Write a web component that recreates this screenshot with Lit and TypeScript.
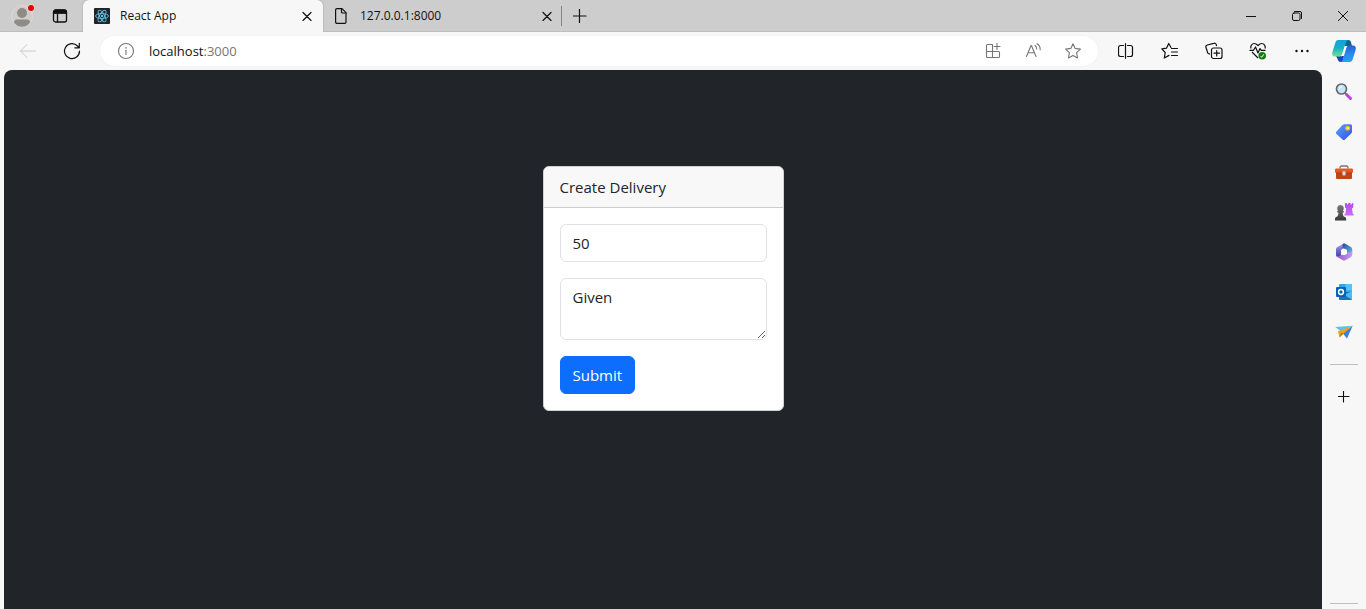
import { LitElement, html, css, svg } from "lit";
import { customElement, state } from "lit/decorators.js";

const line = (size: number, body: unknown, width = 1) => html`
  <svg width=${size} height=${size} viewBox="0 0 ${size} ${size}" fill="none" stroke="currentColor"
    stroke-width=${width} stroke-linecap="round" stroke-linejoin="round" aria-hidden="true">${body}</svg>`;

const art = (size: number, body: unknown) => html`
  <svg width=${size} height=${size} viewBox="0 0 ${size} ${size}" aria-hidden="true">${body}</svg>`;

const icons = {
  profile: art(28, svg`
    <circle cx="14" cy="14" r="10.5" fill="#d0cdca" stroke="#dcdad8"/>
    <circle cx="14" cy="11" r="5" fill="#8f8b87"/>
    <path d="M6 20.5C6 18.3 7.300 17.500 9 17.500h10c1.700 0 3 .8 3 3C20 23.300 17.300 24.800 14 24.800S8 23.300 6 20.500z" fill="#8f8b87"/>
    <circle cx="23" cy="6" r="3.600" fill="#e60000" stroke="#e8e4e4"/>`),
  workspaces: line(16, svg`
    <rect x="1.500" y="2" width="13" height="12" rx="2" stroke-width="1.300"/>
    <path d="M1.500 5V4a2 2 0 0 1 2-2h9a2 2 0 0 1 2 2v1z" fill="currentColor"/>
    <path d="M5.500 6v8" stroke-width="1.300"/>`),
  react: art(16, svg`
    <rect width="16" height="16" rx="1" fill="#20232a"/>
    <g fill="none" stroke="#61c3dd" stroke-width=".9">
      <ellipse cx="8" cy="8" rx="6.500" ry="2.500"/>
      <ellipse cx="8" cy="8" rx="6.500" ry="2.500" transform="rotate(60 8 8)"/>
      <ellipse cx="8" cy="8" rx="6.500" ry="2.500" transform="rotate(120 8 8)"/>
    </g><circle cx="8" cy="8" r="1.300" fill="#61c3dd"/>`),
  file: line(16, svg`<path d="M3 .6h5l4 4V14a1.400 1.400 0 0 1-1.400 1.400H3A1.400 1.400 0 0 1 1.600 14V2A1.400 1.400 0 0 1 3 .6z"/><path d="M7.500 .6V4a1 1 0 0 0 1 1H12"/>`, 1.2),
  closeTab: line(10, svg`<path d="M1 1.500l8 8M9 1.500l-8 8"/>`, 1.2),
  plus: line(14, svg`<path d="M6.500 .5v13M0 7h13"/>`, 1.2),
  plusSmall: line(12, svg`<path d="M5.500 0v11M0 5.500h11"/>`, 1.1),
  minimize: line(10, svg`<path d="M0 5.500h10"/>`),
  restore: line(10, svg`<rect x=".5" y="2" width="7.500" height="7.500" rx="1.500"/><path d="M2.500.5H8A1.500 1.500 0 0 1 9.500 2v5.500"/>`),
  closeWindow: line(10, svg`<path d="M.3.3l9.400 9.400M9.700.3L.3 9.700"/>`),
  back: line(16, svg`<path d="M15.500 8H.7M7 1.500L.5 8 7 14.500"/>`),
  reload: line(18, svg`<path d="M16.500 9A7.500 7.500 0 1 1 14.500 4L16 5.500M16.300 1.300v4.500h-4.500"/>`, 1.2),
  info: line(18, svg`<circle cx="9" cy="9" r="7.500"/><path d="M9 8.200V12.500"/><path d="M9 5.700v.2" stroke-width="1.500"/>`, 1.1),
  apps: line(16, svg`<path d="M7.500 1.500H2.500a1 1 0 0 0-1 1v11a1 1 0 0 0 1 1h11a1 1 0 0 0 1-1V9.500a1 1 0 0 0-1-1H1.500M7.500 1.500v13M12 .5v6M9 3.500h6"/>`, 1.1),
  readAloud: line(16, svg`<path d="M1.500 13.500L6 2.500h.4L11 13.500M3 9.700h6.500M10 2.500c1.200.8 1.700 2 1.700 3.500M12 .7c2.300 1.300 3.300 3.300 3.200 6"/>`, 1.1),
  star: line(16, svg`<path d="M8 .7l2.200 4.700 5.200.7-3.800 3.600.9 5.300L8 12.500 3.500 15l.9-5.300L.6 6.100l5.200-.7z"/>`, 1.1),
  split: line(16, svg`<path d="M5.500 2.500H2.500a2 2 0 0 0-2 2v7a2 2 0 0 0 2 2h3M9.500 2.500h3a2 2 0 0 1 2 2v7a2 2 0 0 1-2 2h-3M7.500 .7v14.600"/>`, 1.2),
  favorites: line(18, svg`<path d="M10 5.500L7.700 1.500 5.500 6.200.8 6.800l3.400 3.700-.9 5.500L8 13.400M10.500 6.500h6M10.500 10h6M10.500 13.500h6"/>`, 1.2),
  collections: line(18, svg`<rect x="6.500" y="6" width="10.500" height="10.500" rx="2"/><path d="M11.700 8.500v5.500M9 11.200h5.500M4.500 12l-1.200-.6A2 2 0 0 1 2.300 9.500L1 5.500A2 2 0 0 1 2.300 3l6.500-1.700a2 2 0 0 1 2.500 1.400l.2 1"/>`, 1.2),
  health: html`<svg width="18" height="18" viewBox="0 0 18 18" fill="none" stroke="currentColor" stroke-width="1.200" stroke-linejoin="round" aria-hidden="true">
    <path d="M2 6.500C1 4 3 1.500 5.300 1.500 7 1.500 8 2.500 9 3.500c1-1 2-2 3.700-2C15 1.500 17 4 16 6.500M3 10l6 6M.5 8.300h4L6.500 5l2.500 6 2-4.500 1.200 1.800h4.300"/>
    <circle cx="13.200" cy="13.800" r="3.800" fill="#107c10" stroke="none"/><path d="M11.500 14.200l1.200 1 2.200-2.800" stroke="#b9e0b9" stroke-width="1.100"/></svg>`,
  more: html`<svg width="16" height="16" viewBox="0 0 16 16" fill="currentColor" aria-hidden="true"><circle cx="2.500" cy="8" r="1.200"/><circle cx="8" cy="8" r="1.200"/><circle cx="13.500" cy="8" r="1.200"/></svg>`,
  copilot: art(24, svg`
    <defs>
      <linearGradient id="ca" x1="0" y1="0" x2="0" y2="1"><stop offset="0" stop-color="#12a0e0"/><stop offset=".5" stop-color="#16b3c4"/><stop offset="1" stop-color="#7be08c"/></linearGradient>
      <linearGradient id="cb" x1="0" y1="0" x2="0" y2="1"><stop offset="0" stop-color="#2263d0"/><stop offset=".5" stop-color="#2d86f0"/><stop offset="1" stop-color="#19a8f5"/></linearGradient>
    </defs>
    <path d="M11 1h5.500c1.400 0 2.100 1 2.500 2.200L20 7h-7z" fill="#15608f"/>
    <path d="M4 17h8l-1 6H8.500c-1.500 0-2-.8-2.500-2z" fill="#1746c4"/>
    <path d="M6.500 1H16.500c-1.600 0-2.200 1.500-2.700 3L10 15.500c-.5 1.500-1.500 2-3 2H3C.5 17.500-.3 15.500.4 13l3-9.500C4 1.800 5 1 6.500 1z" fill="url(#ca)"/>
    <path d="M17.500 23H8.200c1.500 0 2.200-1.300 2.700-2.800L14.500 8.500c.5-1.500 1.200-2 2.700-2H21c2.500 0 3.300 2 2.600 4.500l-3 9.500c-.6 1.700-1.600 2.500-3.100 2.500z" fill="url(#cb)"/>
    <path d="M15.500 6.700c-1.800 0-2.700.8-3.200 2.300l-2 6.200c-.4 1.100-.8 1.700-1.800 2.200 1.700 0 2.800-.8 3.300-2.300l2.100-6.300c.3-1 .7-1.700 1.600-2.100z" fill="#fff"/>`),
  search: art(18, svg`
    <path d="M11.500 11.500l4 4" stroke="#c03df0" stroke-width="3" stroke-linecap="round"/><path d="M10 10l2 2" stroke="#777" stroke-width="1.500"/>
    <circle cx="6.500" cy="6" r="5" fill="#c5e6fb" stroke="#686868" stroke-width="1.700"/><path d="M4 6A3 3 0 0 1 7 3.500" stroke="#fff" fill="none"/>`),
  shopping: art(18, svg`
    <defs><linearGradient id="tg" x1="0" y1="0" x2="1" y2="1"><stop offset="0" stop-color="#58a4ff"/><stop offset="1" stop-color="#334ee8"/></linearGradient></defs>
    <path d="M9.500 1.200H15.500a1.500 1.500 0 0 1 1.500 1.500v6c0 .8-.3 1.300-.8 1.800L10 16.500c-.8.8-1.700.8-2.500 0L1.500 11c-.8-.8-.8-1.700 0-2.500l6-6.500c.6-.6 1.200-.8 2-.8z" fill="url(#tg)"/>
    <circle cx="12.700" cy="5.200" r="1.900" fill="#fff0a0" stroke="#e9b41a" stroke-width="1.200"/>`),
  tools: art(18, svg`
    <path d="M5 5.500V4.500A1.500 1.500 0 0 1 6.500 3h5A1.500 1.500 0 0 1 13 4.500v1" fill="none" stroke="#777" stroke-width="1.300"/>
    <rect x="1" y="8.500" width="16" height="7.500" rx="1" fill="#c54216"/><rect y="5.500" width="18" height="4.500" rx="1.200" fill="#e55a22"/>
    <path d="M1 10h16" stroke="#a8360f"/><rect x="7.300" y="8" width="3.400" height="4.500" rx="1.500" fill="#ddd" stroke="#999" stroke-width=".5"/>`),
  games: art(20, svg`
    <defs>
      <linearGradient id="ga" x1="0" y1="0" x2="0" y2="1"><stop offset="0" stop-color="#b047f5"/><stop offset="1" stop-color="#d06bfa"/></linearGradient>
      <linearGradient id="gb" x1="0" y1="0" x2="0" y2="1"><stop offset="0" stop-color="#7a7a7a"/><stop offset="1" stop-color="#383838"/></linearGradient>
    </defs>
    <path d="M10.800 1.500l2-.5.3 1.500h1.200V1h2.200v1.500h1.200L18 1l1.500.5-.5 4.500h-1l.7 5.500 1 .7V13.500H10.500V12l1-.7L12.200 6h-1z" fill="url(#ga)"/>
    <path d="M6.500 3a3.300 3.300 0 0 1 2.300 5.700h1v1.700H8.700c0 2.400.6 3.600 1.600 4.400 1.200.4 1.900 1 1.900 2.200v1.500H1V17c0-1.200.7-1.800 1.800-2.200 1-.8 1.700-2 1.700-4.400H3.200V8.700h1A3.300 3.300 0 0 1 6.500 3z" fill="url(#gb)"/>`),
  microsoft365: art(18, svg`
    <defs>
      <linearGradient id="ma" x1="0" y1="0" x2="0" y2="1"><stop offset="0" stop-color="#a89af2"/><stop offset="1" stop-color="#3a4497"/></linearGradient>
      <linearGradient id="mb" x1="0" y1="0" x2="1" y2="0"><stop offset="0" stop-color="#8f5ac8"/><stop offset="1" stop-color="#c79af0"/></linearGradient>
      <linearGradient id="mc" x1="0" y1="0" x2="1" y2="1"><stop offset="0" stop-color="#244a94"/><stop offset="1" stop-color="#6cc0ee"/></linearGradient>
    </defs>
    <path d="M9.500.2L2.500 4C1.500 4.600 1 5.300 1 6.500v5.300c0 1 .5 1.700 1.300 2.200L6 13V7L10.500 4z" fill="url(#ma)"/>
    <path d="M7.500 1c.8-.6 1.800-.7 2.800-.2L16 4c.8.500 1.200 1.200 1.200 2.200v5.500L12 10.500V7L7.500 5z" fill="url(#mc)"/>
    <path d="M1.200 12.500c1 1 2.700.8 3.800.2L12 9.500l5.200-1v3.300c0 1-.4 1.700-1.200 2.200L10.300 17.200c-.8.500-1.600.5-2.400 0L2.200 14a2.200 2.200 0 0 1-1-1.500z" fill="url(#mb)"/>
    <path d="M9 5.700l3 1.600v3.400l-3 1.600-3-1.600V7.300z" fill="#fff"/>`),
  outlook: art(18, svg`
    <rect x="4" y="1" width="13" height="13" rx="1" fill="#31a5e7"/><path d="M10.500 1H16a1 1 0 0 1 1 1v5.500h-6.500z" fill="#54c4f5"/>
    <path d="M4 9h13v7a1 1 0 0 1-1 1H5a1 1 0 0 1-1-1z" fill="#1377bd"/><path d="M17 8v8.500L9 12z" fill="#47bdf0"/>
    <rect x="1" y="4" width="10" height="10" rx="1" fill="#0b62b5"/><circle cx="6" cy="9" r="2.400" fill="none" stroke="#fff" stroke-width="1.500"/>`),
  drop: art(18, svg`
    <path d="M.3 4L17.700 2.700 6 8.500z" fill="#58c4ee"/>
    <path d="M17.700 2.700L12 15.500 7.500 10z" fill="#3b7bea"/>
    <path d="M17.700 2.700L3 8.300 4.500 14.500 8 11z" fill="#eda11c"/>
    <path d="M4.500 14.500L6 9.700 8.500 10.500z" fill="#b9720f"/>`),
};

const button = (label: string, icon: unknown, cls = "") =>
  html`<button type="button" class="icon ${cls}" aria-label=${label} title=${label}>${icon}</button>`;

@customElement("delivery-form")
class DeliveryForm extends LitElement {
  @state() private amount = "50";
  @state() private status = "Given";

  static styles = css`
    :host { display: block; width: 241px; max-width: 100%; }
    * { box-sizing: border-box; }
    .card {
      border: 1px solid #d0d1d1; border-radius: 6px; background: #fff; color: #212529;
      font: 15px/24px "Open Sans", "Noto Sans", sans-serif; overflow: hidden;
    }
    .header { padding: 8px 16px; background: #f8f8f8; border-bottom: 1px solid #cbcccc; }
    .body { display: flex; flex-direction: column; align-items: flex-start; gap: 16px; padding: 16px; }
    .field {
      display: block; width: 100%; margin: 0; padding: 6px 12px; border: 1px solid #dee2e6;
      border-radius: 6px; background: #fff; color: inherit; font: inherit; outline: none;
    }
    .field:focus { border-color: #86b7fe; }
    .text { height: 38px; }
    .area { height: 62px; resize: vertical; overflow: auto; }
    .submit {
      padding: 6px 12px; border: 1px solid #0d6efd; border-radius: 6px; background: #0d6efd;
      color: #fff; font: inherit; cursor: pointer;
    }
  `;

  render() {
    return html`
      <section class="card">
        <div class="header">Create Delivery</div>
        <form class="body" @submit=${(e: Event) => e.preventDefault()}>
          <input class="field text" aria-label="Amount" .value=${this.amount}
            @input=${(e: Event) => (this.amount = (e.target as HTMLInputElement).value)} />
          <textarea class="field area" aria-label="Status" .value=${this.status}
            @input=${(e: Event) => (this.status = (e.target as HTMLTextAreaElement).value)}></textarea>
          <button class="submit" type="submit">Submit</button>
        </form>
      </section>`;
  }
}

@customElement("app-root")
class AppRoot extends LitElement {
  static styles = css`
    :host {
      display: flex; flex-direction: column; height: 100vh; overflow: hidden;
      background: #f7f7f7; color: #111; font: 12px/16px "Open Sans", "Noto Sans", sans-serif;
    }
    * { box-sizing: border-box; }
    svg { display: block; flex: none; }
    .icon {
      display: flex; align-items: center; justify-content: center; flex: none; padding: 0;
      border: 0; background: none; color: inherit; font: inherit;
    }

    .tabs { display: flex; flex: none; height: 32px; background: #cdcdcd; border-bottom: 1px solid #bebebe; }
    .profile { width: 44px; }
    .workspaces { width: 32px; }
    .tab { display: flex; align-items: center; flex: 0 1 240px; height: 32px; padding: 0 10px 0 11px; gap: 10px; min-width: 0; }
    .active { margin-left: 7px; background: #f7f7f7; border-radius: 6px 6px 0 0; box-shadow: 0 0 2px #999; clip-path: inset(0 -2px 0 -2px); }
    .name { flex: 1; overflow: hidden; text-overflow: ellipsis; white-space: nowrap; }
    .close { width: 12px; height: 16px; }
    .divider { align-self: center; width: 1px; height: 20px; margin-left: -2px; background: #858585; }
    .new { width: 35px; }
    .window { display: flex; margin-left: auto; }
    .window .icon { width: 46px; }

    .toolbar { display: flex; align-items: center; flex: none; height: 38px; padding-left: 6px; }
    .tool { width: 44px; height: 30px; }
    .muted { color: #c8c8c8; }
    .address {
      display: flex; align-items: center; flex: 1; min-width: 0; height: 30px; margin: 0 6px;
      padding: 0 5px 0 17px; border-radius: 15px; background: #fff; color: #767676; box-shadow: 0 0 2px #eaeaea;
    }
    .url { flex: 1; padding-left: 14px; font-size: 13px; white-space: nowrap; }
    .hostname { color: #111; }
    .inner { width: 40px; height: 30px; }
    .copilot { width: 40px; height: 30px; margin-right: 2px; }

    .content { display: flex; flex: 1; min-height: 0; }
    .page {
      display: flex; flex: 1; align-items: flex-start; justify-content: center; min-width: 0;
      margin-left: 4px; padding-top: 96px; background: #212529; border-radius: 8px 8px 0 0;
    }
    .sidebar { display: flex; flex-direction: column; align-items: center; flex: none; width: 44px; padding: 2px 0 5px; }
    .side { width: 44px; height: 40px; }
    .rule { flex: none; width: 28px; height: 1px; margin: 12px 0; border: 0; background: #bdbdbd; }
    .last { margin: auto 0 0; }
  `;

  render() {
    return html`
      <header class="tabs">
        ${button("Profile", icons.profile, "profile")}
        ${button("Workspaces", icons.workspaces, "workspaces")}
        <div class="tab active">${icons.react}<span class="name">React App</span>${button("Close tab", icons.closeTab, "close")}</div>
        <div class="tab">${icons.file}<span class="name">127.0.0.1:8000</span>${button("Close tab", icons.closeTab, "close")}</div>
        <span class="divider"></span>
        ${button("New tab", icons.plus, "new")}
        <div class="window">
          ${button("Minimize", icons.minimize)}${button("Restore", icons.restore)}${button("Close", icons.closeWindow)}
        </div>
      </header>
      <nav class="toolbar">
        ${button("Back", icons.back, "tool muted")}${button("Refresh", icons.reload, "tool")}
        <div class="address">
          ${button("Site information", icons.info)}
          <span class="url"><span class="hostname">localhost</span>:3000</span>
          ${button("Apps", icons.apps, "inner")}${button("Read aloud", icons.readAloud, "inner")}${button("Add to favorites", icons.star, "inner")}
        </div>
        ${button("Split screen", icons.split, "tool")}${button("Favorites", icons.favorites, "tool")}
        ${button("Collections", icons.collections, "tool")}${button("Browser essentials", icons.health, "tool")}
        ${button("Settings and more", icons.more, "tool")}${button("Copilot", icons.copilot, "copilot")}
      </nav>
      <div class="content">
        <main class="page"><delivery-form></delivery-form></main>
        <aside class="sidebar">
          ${button("Search", icons.search, "side")}${button("Shopping", icons.shopping, "side")}
          ${button("Tools", icons.tools, "side")}${button("Games", icons.games, "side")}
          ${button("Microsoft 365", icons.microsoft365, "side")}${button("Outlook", icons.outlook, "side")}
          ${button("Drop", icons.drop, "side")}
          <hr class="rule" />
          ${button("Customize", icons.plusSmall, "side")}
          <hr class="rule last" />
        </aside>
      </div>`;
  }
}
